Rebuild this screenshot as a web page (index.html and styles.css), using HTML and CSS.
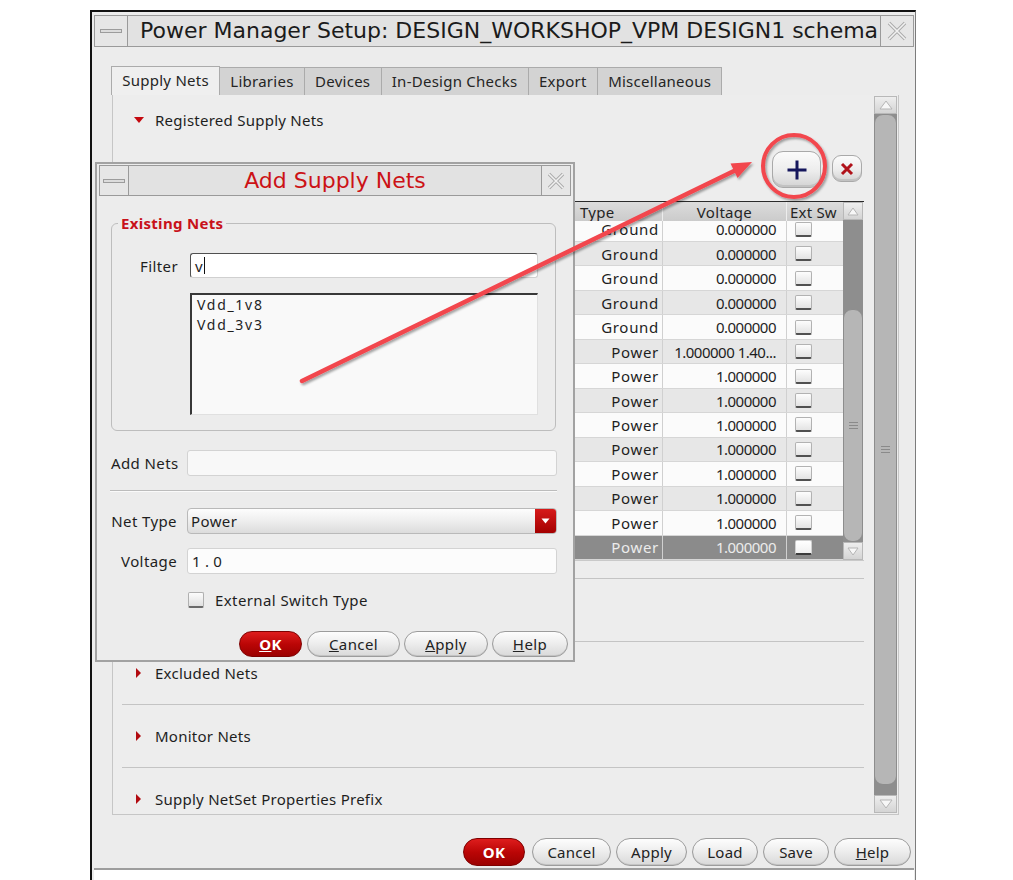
FILE: index.html
```html
<!DOCTYPE html>
<html>
<head>
<meta charset="utf-8">
<title>Power Manager Setup</title>
<link rel="stylesheet" href="styles.css">
</head>
<body>
<div class="window">
  <div class="wm-bar">
    <div class="wm-box"><span class="wm-min"></span></div>
    <div class="wm-title">Power Manager Setup: DESIGN_WORKSHOP_VPM DESIGN1 schema</div>
    <div class="wm-box wm-close">
      <svg width="22" height="22" viewBox="0 0 22 22"><path d="M3 3 L19 19 M19 3 L3 19" stroke="#a9a9a9" stroke-width="3.4" fill="none"/><path d="M3 3 L19 19 M19 3 L3 19" stroke="#f1f1f1" stroke-width="1.6" fill="none"/></svg>
    </div>
  </div>
  <div class="win-body">
    <div class="tabs">
      <div class="tab active">Supply Nets</div>
      <div class="tab">Libraries</div>
      <div class="tab">Devices</div>
      <div class="tab">In-Design Checks</div>
      <div class="tab">Export</div>
      <div class="tab">Miscellaneous</div>
    </div>
    <div class="pane">
      <div class="pane-content">
        <div class="section open">
          <div class="sec-head"><span class="tri-down"></span>Registered Supply Nets</div>
          <div class="tools">
            <button class="tool add"><svg width="22" height="22" viewBox="0 0 22 22"><path d="M11 1.5 V20.5 M1.5 11 H20.5" stroke="#15165c" stroke-width="3" fill="none"/></svg></button>
            <button class="tool del"><svg width="14" height="14" viewBox="0 0 14 14"><path d="M2 2 L12 12 M12 2 L2 12" stroke="#b0121a" stroke-width="3" fill="none"/></svg></button>
          </div>
          <div class="nets-table">
            <div class="nt-main">
              <div class="nt-row nt-head">
                <div class="c-name"></div>
                <div class="c-type">Type</div>
                <div class="c-volt">Voltage</div>
                <div class="c-ext">Ext Sw</div>
              </div>
              <div class="nt-body">
                <div class="nt-row first"><div class="c-name"></div><div class="c-type">Ground</div><div class="c-volt">0.000000</div><div class="c-ext"><span class="cb"></span></div></div>
                <div class="nt-row alt"><div class="c-name"></div><div class="c-type">Ground</div><div class="c-volt">0.000000</div><div class="c-ext"><span class="cb"></span></div></div>
                <div class="nt-row"><div class="c-name"></div><div class="c-type">Ground</div><div class="c-volt">0.000000</div><div class="c-ext"><span class="cb"></span></div></div>
                <div class="nt-row alt"><div class="c-name"></div><div class="c-type">Ground</div><div class="c-volt">0.000000</div><div class="c-ext"><span class="cb"></span></div></div>
                <div class="nt-row"><div class="c-name"></div><div class="c-type">Ground</div><div class="c-volt">0.000000</div><div class="c-ext"><span class="cb"></span></div></div>
                <div class="nt-row alt"><div class="c-name"></div><div class="c-type">Power</div><div class="c-volt">1.000000 1.40...</div><div class="c-ext"><span class="cb"></span></div></div>
                <div class="nt-row"><div class="c-name"></div><div class="c-type">Power</div><div class="c-volt">1.000000</div><div class="c-ext"><span class="cb"></span></div></div>
                <div class="nt-row alt"><div class="c-name"></div><div class="c-type">Power</div><div class="c-volt">1.000000</div><div class="c-ext"><span class="cb"></span></div></div>
                <div class="nt-row"><div class="c-name"></div><div class="c-type">Power</div><div class="c-volt">1.000000</div><div class="c-ext"><span class="cb"></span></div></div>
                <div class="nt-row alt"><div class="c-name"></div><div class="c-type">Power</div><div class="c-volt">1.000000</div><div class="c-ext"><span class="cb"></span></div></div>
                <div class="nt-row"><div class="c-name"></div><div class="c-type">Power</div><div class="c-volt">1.000000</div><div class="c-ext"><span class="cb"></span></div></div>
                <div class="nt-row alt"><div class="c-name"></div><div class="c-type">Power</div><div class="c-volt">1.000000</div><div class="c-ext"><span class="cb"></span></div></div>
                <div class="nt-row"><div class="c-name"></div><div class="c-type">Power</div><div class="c-volt">1.000000</div><div class="c-ext"><span class="cb"></span></div></div>
                <div class="nt-row sel"><div class="c-name"></div><div class="c-type">Power</div><div class="c-volt">1.000000</div><div class="c-ext"><span class="cb"></span></div></div>
              </div>
            </div>
            <div class="sbar sbar-sm">
              <div class="sb-arrow"><svg width="12" height="9" viewBox="0 0 12 9"><path d="M1 8 L6 1 L11 8 Z" fill="#f7f7f7" stroke="#b5b5b5"/></svg></div>
              <div class="sb-track">
                <div class="sb-gap"></div>
                <div class="sb-thumb"><span class="grip"></span></div>
              </div>
              <div class="sb-arrow"><svg width="12" height="9" viewBox="0 0 12 9"><path d="M1 1 L6 8 L11 1 Z" fill="#f7f7f7" stroke="#b5b5b5"/></svg></div>
            </div>
          </div>
        </div>
        <div class="sep"></div>
        <div class="section closed"></div>
        <div class="sep"></div>
        <div class="section closed"><div class="sec-head"><span class="tri-right"></span>Excluded Nets</div></div>
        <div class="sep"></div>
        <div class="section closed"><div class="sec-head"><span class="tri-right"></span>Monitor Nets</div></div>
        <div class="sep"></div>
        <div class="section last"><div class="sec-head"><span class="tri-right"></span>Supply NetSet Properties Prefix</div></div>
      </div>
      <div class="sbar sbar-lg">
        <div class="sb-arrow"><svg width="14" height="10" viewBox="0 0 14 10"><path d="M1 9 L7 1 L13 9 Z" fill="#f7f7f7" stroke="#b5b5b5"/></svg></div>
        <div class="sb-track">
          <div class="sb-thumb"><span class="grip"></span></div>
          <div class="sb-gap"></div>
        </div>
        <div class="sb-arrow"><svg width="14" height="10" viewBox="0 0 14 10"><path d="M1 1 L7 9 L13 1 Z" fill="#f7f7f7" stroke="#b5b5b5"/></svg></div>
      </div>
    </div>
    <div class="actions">
      <button class="btn ok w-ok">OK</button>
      <button class="btn w-cancel">Cancel</button>
      <button class="btn w-apply">Apply</button>
      <button class="btn w-load">Load</button>
      <button class="btn w-save">Save</button>
      <button class="btn w-help"><u>H</u>elp</button>
    </div>
  </div>
  <div class="win-foot"></div>
</div>

<div class="dialog">
  <div class="wm-bar dlg-bar">
    <div class="wm-box"><span class="wm-min"></span></div>
    <div class="wm-title dlg-title">Add Supply Nets</div>
    <div class="wm-box wm-close">
      <svg width="20" height="20" viewBox="0 0 20 20"><path d="M3 3 L17 17 M17 3 L3 17" stroke="#a9a9a9" stroke-width="3.2" fill="none"/><path d="M3 3 L17 17 M17 3 L3 17" stroke="#f1f1f1" stroke-width="1.5" fill="none"/></svg>
    </div>
  </div>
  <div class="dlg-body">
    <fieldset class="group">
      <legend>Existing Nets</legend>
      <div class="g-row">
        <label class="lbl">Filter</label>
        <div class="field filter">v<span class="caret"></span></div>
      </div>
      <div class="g-row list-row">
        <span></span>
        <div class="listbox">
          <div>Vdd_1v8</div>
          <div>Vdd_3v3</div>
        </div>
      </div>
    </fieldset>
    <div class="f-row addnets">
      <label class="lbl">Add Nets</label>
      <div class="field plain"></div>
    </div>
    <div class="hsep"></div>
    <div class="f-row nettype">
      <label class="lbl">Net Type</label>
      <div class="combo"><span>Power</span><span class="combo-btn"><svg width="9" height="6" viewBox="0 0 9 6"><path d="M0.5 0.5 H8.5 L4.5 5.5 Z" fill="#fff"/></svg></span></div>
    </div>
    <div class="f-row voltage">
      <label class="lbl">Voltage</label>
      <div class="field plain volt">1 . 0</div>
    </div>
    <div class="f-row check-row">
      <span></span>
      <div class="check"><span class="cbox"></span>External Switch Type</div>
    </div>
    <div class="dlg-actions">
      <button class="btn ok d-ok"><u>O</u>K</button>
      <button class="btn d-cancel"><u>C</u>ancel</button>
      <button class="btn d-apply"><u>A</u>pply</button>
      <button class="btn d-help"><u>H</u>elp</button>
    </div>
  </div>
</div>

<svg class="annot" width="1013" height="880" viewBox="0 0 1013 880">
  <defs>
    <filter id="sh" x="-5%" y="-20%" width="110%" height="140%">
      <feDropShadow dx="1.5" dy="2" stdDeviation="1.2" flood-color="#000" flood-opacity="0.35"/>
    </filter>
  </defs>
  <g filter="url(#sh)">
    <circle cx="794" cy="166" r="31" fill="none" stroke="#f2464e" stroke-width="4"/>
    <line x1="302" y1="381" x2="736" y2="170" stroke="#f2464e" stroke-width="4.5" stroke-linecap="round"/>
    <polygon points="752,162 730.5,163.6 737.5,178" fill="#f2464e"/>
  </g>
</svg>
</body>
</html>
```

FILE: styles.css
```css
* { box-sizing: border-box; }
html, body { margin: 0; padding: 0; background: #ffffff; }
body {
  width: 1013px;
  height: 880px;
  overflow: hidden;
  position: relative;
  font-family: "Noto Sans", "Open Sans", "DejaVu Sans", sans-serif;
  font-size: 15px;
  letter-spacing: 0.25px;
  color: #1e1e1e;
}
button { font: inherit; letter-spacing: inherit; color: inherit; margin: 0; padding: 0; cursor: default; }

/* ---------- main window ---------- */
.window {
  margin: 10px 0 0 90px;
  width: 826px;
  height: 870px;
  border-left: 2px solid #111;
  border-top: 2px solid #111;
  border-right: 1px solid #7c7c7c;
  background: #ececec;
  padding: 3px 1px 0 2px;
  display: flex;
  flex-direction: column;
}

.wm-bar {
  height: 32px;
  display: flex;
  border: 1px solid #9a9a9a;
  background: #e2e2e2;
  flex: none;
}
.wm-box {
  width: 33px;
  flex: none;
  display: flex;
  align-items: center;
  justify-content: center;
  background: #e6e6e6;
  border-right: 1px solid #9a9a9a;
}
.wm-close { border-right: none; border-left: 1px solid #9a9a9a; }
.wm-min {
  width: 22px;
  height: 4px;
  background: #dcdcdc;
  border: 1px solid #9c9c9c;
}
.wm-title {
  flex: 1;
  min-width: 0;
  overflow: hidden;
  white-space: nowrap;
  font-family: "DejaVu Sans", sans-serif;
  font-size: 22px;
  letter-spacing: 0;
  line-height: 30px;
  padding-left: 12px;
  color: #1b1b1b;
}

.win-body {
  height: 821px;
  flex: none;
  display: flex;
  flex-direction: column;
  padding: 19px 15px 0 18px;
}
.win-foot {
  flex: 1;
  border-top: 2px solid #9d9d9d;
  background: #ffffff;
}

/* tabs */
.tabs {
  display: flex;
  align-items: flex-end;
  height: 29px;
  margin-left: -1px;
  flex: none;
}
.tab {
  height: 28px;
  line-height: 27px;
  padding: 0 10.25px;
  background: #d3d3d3;
  border: 1px solid #ababab;
  border-bottom: none;
  border-left: none;
  color: #252525;
}
.tab:first-child { border-left: 1px solid #ababab; }
.tab.active {
  height: 29px;
  background: #efefef;
}

/* pane */
.pane {
  height: 720px;
  flex: none;
  display: flex;
  border: 1px solid #c6c6c6;
  border-top: none;
  background: #ededed;
  padding: 1px 1px 1px 9px;
}
.pane-content {
  flex: 1;
  min-width: 0;
  margin-right: 10px;
  overflow: hidden;
}
.sec-head {
  height: 22px;
  line-height: 22px;
  display: flex;
  align-items: center;
  white-space: nowrap;
}
.tri-down {
  width: 0; height: 0;
  margin-left: 12px;
  margin-right: 11px;
  border-left: 5px solid transparent;
  border-right: 5px solid transparent;
  border-top: 6px solid #c4090f;
}
.tri-right {
  width: 0; height: 0;
  margin-left: 14px;
  margin-right: 14px;
  border-top: 5px solid transparent;
  border-bottom: 5px solid transparent;
  border-left: 5px solid #b20a10;
}
.section.open { padding: 13px 0 17px; }
.section.closed { height: 62px; padding-top: 20px; }
.section.last { padding-top: 20px; }
.sep {
  height: 1px;
  background: #c4c4c4;
}

.tools {
  margin-top: 19px;
  height: 37px;
  display: flex;
  justify-content: flex-end;
  align-items: center;
  gap: 11px;
  padding-right: 2px;
}
.tool {
  display: flex;
  align-items: center;
  justify-content: center;
  border: 1px solid #a9a9a9;
  background: linear-gradient(#fbfbfb, #ececec 55%, #d3d3d3);
  box-shadow: inset 0 -2px 0 #c2c2c2;
}
.tool.add { width: 49px; height: 37px; border-radius: 11px; margin-top: 2px; }
.tool.del { width: 30px; height: 27px; border-radius: 9px; }

/* table */
.nets-table {
  margin-top: 14px;
  height: 360px;
  display: flex;
  border-top: 1px solid #2a2a2a;
  border-bottom: 1px solid #c9c9c9;
}
.nt-main { flex: 1; min-width: 0; display: flex; flex-direction: column; }
.nt-row {
  display: grid;
  grid-template-columns: 1fr 88px 124px 56px;
  height: 24.5px;
  background: #fbfbfb;
  border-bottom: 1px solid #d6d6d6;
}
.nt-row > div { border-right: 1px solid #d0d0d0; display: flex; align-items: center; }
.nt-row > div:last-child { border-right: none; }
.nt-row.alt { background: #e7e7e7; }
.nt-row.sel { background: #8b8b8b; color: #ececec; }
.nt-row.first { margin-top: -3.5px; }
.c-type { justify-content: flex-end; padding-right: 3px; letter-spacing: 0.7px; }
.c-volt { justify-content: flex-end; padding-right: 10px; letter-spacing: -0.5px; }
.c-ext { padding-left: 8px; }
.nt-head {
  height: 19px;
  background: linear-gradient(#dcdcdc, #cbcbcb);
  border-bottom: none;
  color: #252525;
}
.nt-head > div { border-right: 1px solid #ededed; }
.nt-head .c-type { justify-content: flex-start; padding-left: 5px; letter-spacing: 0.3px; }
.nt-head .c-volt { justify-content: center; padding-right: 0; letter-spacing: 0.3px; }
.nt-head .c-ext { padding-left: 3px; letter-spacing: 0.2px; }
.nt-body { flex: 1; overflow: hidden; display: flex; flex-direction: column; }
.cb {
  width: 17px;
  height: 15px;
  border: 1px solid #b2b2b2;
  border-bottom: 2px solid #505050;
  border-radius: 2px;
  background: linear-gradient(#fdfdfd, #e3e3e3);
}
.nt-row.sel .cb { background: linear-gradient(#ffffff, #f0f0f0); border-color: #d0d0d0; border-bottom-color: #3c3c3c; }

/* scrollbars */
.sbar { display: flex; flex-direction: column; flex: none; }
.sbar-sm { width: 20px; margin-right: 1px; }
.sbar-lg { width: 23px; }
.sb-arrow {
  height: 18px;
  flex: none;
  display: flex;
  align-items: center;
  justify-content: center;
  background: linear-gradient(#eeeeee, #d4d4d4);
  border: 1px solid #b8b8b8;
}
.sb-track {
  flex: 1;
  display: flex;
  flex-direction: column;
  background: #8e8e8e;
}
.sb-gap { flex: none; }
.sbar-sm .sb-gap { height: 89px; }
.sbar-lg .sb-gap { height: 10px; }
.sb-thumb {
  flex: 1;
  background: #b6b6b6;
  border: 1px solid #8d8d8d;
  border-radius: 9px;
  display: flex;
  align-items: center;
  justify-content: center;
}
.grip {
  width: 9px;
  height: 7px;
  border-top: 1px solid #8a8a8a;
  border-bottom: 1px solid #8a8a8a;
  background: linear-gradient(transparent 2px, #8a8a8a 2px, #8a8a8a 3px, transparent 3px);
}

/* buttons */
.btn {
  height: 28px;
  border: 1px solid #9c9c9c;
  border-radius: 14px;
  background: linear-gradient(#fdfdfd, #eeeeee 45%, #d9d9d9);
  box-shadow: inset 0 -1px 0 #c4c4c4;
  color: #222;
  text-align: center;
}
.btn.ok {
  background: linear-gradient(#de1d1d, #bb0606 50%, #9b0000);
  border-color: #7e0000;
  color: #ffffff;
  font-weight: bold;
  box-shadow: none;
}
.actions {
  margin-top: 23px;
  margin-right: -12px;
  display: flex;
  justify-content: flex-end;
  gap: 5px;
}
.w-ok { width: 62px; margin-right: 2px; }
.w-cancel { width: 79px; }
.w-apply { width: 71px; }
.w-load { width: 66px; }
.w-save { width: 66px; }
.w-help { width: 77px; }

/* ---------- dialog ---------- */
.dialog {
  position: absolute;
  left: 95px;
  top: 162px;
  width: 480px;
  height: 500px;
  border: 2px solid #a2a2a2;
  background: #ececec;
  display: flex;
  flex-direction: column;
  z-index: 5;
}
.dlg-bar { height: 31px; margin: 1px 2px 0; }
.dlg-bar .wm-box { width: 29px; }
.dlg-title {
  text-align: center;
  padding-left: 0;
  color: #cc1216;
  font-size: 22px;
  line-height: 29px;
}
.dlg-body {
  flex: 1;
  display: flex;
  flex-direction: column;
  padding: 18px 16px 0 14px;
  letter-spacing: 0.4px;
}
.group {
  margin: 0 1px 0 0;
  padding: 0 17px 15px 0;
  border: 1px solid #bdbdbd;
  border-radius: 6px;
  min-width: 0;
}
.group legend {
  margin-left: 6px;
  padding: 0 3px;
  color: #c8121a;
  font-weight: bold;
  font-size: 15px;
  letter-spacing: 0.3px;
  line-height: 18px;
}
.g-row {
  display: grid;
  grid-template-columns: 66px 1fr;
  column-gap: 12px;
  align-items: center;
  margin-top: 21px;
}
.g-row.list-row { margin-top: 15px; }
.lbl { text-align: right; white-space: nowrap; }
.field {
  height: 25px;
  border-radius: 3px;
  display: flex;
  align-items: center;
  padding-left: 4px;
}
.filter {
  background: #ffffff;
  border: 1px solid #d0d0d0;
  border-top-color: #505050;
  border-left-color: #505050;
}
.caret {
  width: 1px;
  height: 17px;
  background: #111;
  margin-left: 1px;
}
.listbox {
  height: 122px;
  background: #f9f9f9;
  border-top: 2px solid #383838;
  border-left: 2px solid #383838;
  border-right: 1px solid #e0e0e0;
  border-bottom: 1px solid #e0e0e0;
  padding: 0 5px;
  line-height: 20px;
  font-size: 14px;
  letter-spacing: 1.7px;
}
.f-row {
  display: grid;
  grid-template-columns: 66px 1fr;
  column-gap: 10px;
  align-items: center;
}
.addnets { margin-top: 19px; }
.plain {
  height: 26px;
  background: #f8f8f8;
  border: 1px solid #d3d3d3;
}
.hsep {
  margin-top: 14px;
  height: 2px;
  border-top: 1px solid #bcbcbc;
  border-bottom: 1px solid #fafafa;
  margin-left: -1px;
}
.nettype { margin-top: 16px; }
.combo {
  height: 26px;
  display: flex;
  align-items: center;
  justify-content: space-between;
  border: 1px solid #b9b9b9;
  border-radius: 4px;
  background: linear-gradient(#fdfdfd, #eeeeee 50%, #dcdcdc);
  padding-left: 3px;
  overflow: hidden;
}
.combo-btn {
  width: 21px;
  height: 24px;
  display: flex;
  align-items: center;
  justify-content: center;
  background: linear-gradient(#d61a1a, #a40000);
}
.voltage { margin-top: 14px; }
.volt { background: #fcfcfc; padding-left: 4px; letter-spacing: 0.2px; }
.check-row { margin-top: 17px; }
.check {
  display: flex;
  align-items: center;
  height: 18px;
  padding-left: 1px;
}
.cbox {
  width: 16px;
  height: 16px;
  margin-right: 11px;
  border: 1px solid #b0b0b0;
  border-bottom: 2px solid #6a6a6a;
  border-radius: 2px;
  background: linear-gradient(#fcfcfc, #e0e0e0);
}
.dlg-actions {
  margin-top: 22px;
  margin-right: -11px;
  display: flex;
  justify-content: flex-end;
  gap: 4px;
}
.dlg-actions .btn { height: 26px; border-radius: 13px; }
.d-ok { width: 63px; margin-right: 1px; }
.d-cancel { width: 93px; }
.d-apply { width: 84px; }
.d-help { width: 76px; }

/* ---------- annotation overlay ---------- */
.annot {
  position: absolute;
  left: 0;
  top: 0;
  z-index: 10;
  pointer-events: none;
}
```
